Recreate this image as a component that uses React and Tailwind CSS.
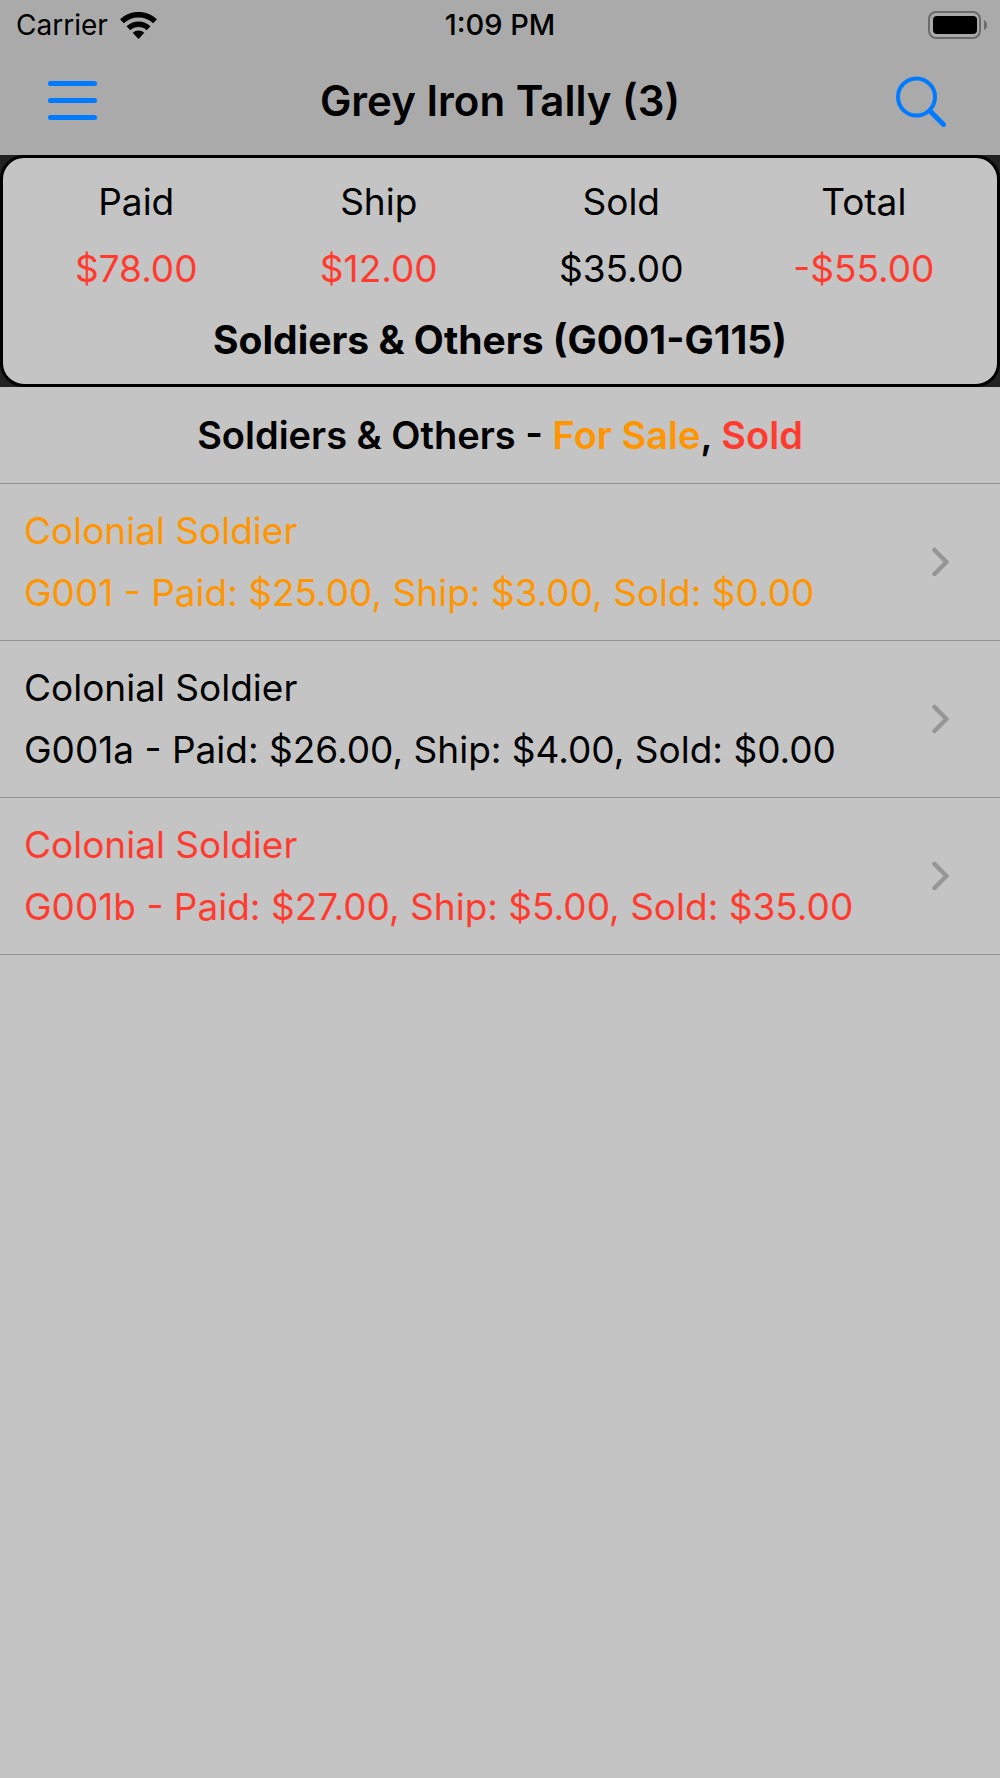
import React from 'react'

const totals = [
  { label: 'Paid', value: '$78.00', color: 'text-[#ff3b30]' },
  { label: 'Ship', value: '$12.00', color: 'text-[#ff3b30]' },
  { label: 'Sold', value: '$35.00', color: 'text-black' },
  { label: 'Total', value: '-$55.00', color: 'text-[#ff3b30]' },
]

const items = [
  { name: 'Colonial Soldier', detail: 'G001 - Paid: $25.00, Ship: $3.00, Sold: $0.00', color: 'text-[#ff9500]' },
  { name: 'Colonial Soldier', detail: 'G001a - Paid: $26.00, Ship: $4.00, Sold: $0.00', color: 'text-black' },
  { name: 'Colonial Soldier', detail: 'G001b - Paid: $27.00, Ship: $5.00, Sold: $35.00', color: 'text-[#ff3b30]' },
]

const StatusBar = () => {
  return (
    <div className="grid grid-cols-3 items-center h-[50px] px-3">
      <div className="flex items-center gap-3 pl-1 text-[28px]">
        <span>Carrier</span>
        <svg width="37" height="27" viewBox="0 0 37 27" aria-hidden="true">
          <path d="M1.900 9.200A24.300 24.300 0 0 1 35.100 9.200" fill="none" stroke="black" strokeWidth="5.500" />
          <path d="M8.400 16.200A14.800 14.800 0 0 1 28.600 16.200" fill="none" stroke="black" strokeWidth="5.500" />
          <path d="M18.500 27L12.700 20.800A8.500 8.500 0 0 1 24.300 20.800z" />
        </svg>
      </div>
      <span className="text-center text-[29px] font-medium">1:09 PM</span>
      <svg className="justify-self-end" width="60" height="28" viewBox="0 0 60 28" aria-hidden="true">
        <rect x="1" y="1" width="51" height="26" rx="7" fill="none" stroke="#6b6b6b" strokeWidth="2" />
        <rect x="5" y="5" width="44" height="18" rx="4" />
        <path d="M56 9q3 1.500 3 5t-3 5z" fill="#6b6b6b" />
      </svg>
    </div>
  )
}

const App = () => {
  return (
    <div className="min-h-screen bg-[#c4c4c4] text-black font-['Inter',sans-serif]">
      <header className="bg-[#aaaaaa]">
        <StatusBar />
        <div className="flex items-center justify-between h-[105px] px-12 pb-1">
          <button aria-label="Menu">
            <svg width="56" height="41" viewBox="0 0 56 41" stroke="#007aff" strokeWidth="5" strokeLinecap="round">
              <path d="M2.500 3.500h44M2.500 20.500h44M2.500 37.500h44" />
            </svg>
          </button>
          <h1 className="text-[42px] font-semibold">Grey Iron Tally (3)</h1>
          <button aria-label="Search">
            <svg width="56" height="53" viewBox="0 0 56 53" fill="none" stroke="#007aff">
              <circle cx="20.500" cy="23" r="18.500" strokeWidth="4" />
              <path d="M34 37l13.500 13.500" strokeWidth="5" strokeLinecap="round" />
            </svg>
          </button>
        </div>
      </header>

      {/* Totals */}
      <section className="bg-[#222]">
        <div className="rounded-[24px] border-[3px] border-black bg-[#c4c4c4] px-3 pt-3 pb-2 text-center">
          <div className="grid grid-cols-4 text-[37px]">
            {totals.map((t) => (
              <div key={t.label}>
                <p className="leading-[64px]">{t.label}</p>
                <p className={`leading-[70px] ${t.color}`}>{t.value}</p>
              </div>
            ))}
          </div>
          <h2 className="text-[39px] leading-[72px] font-bold">Soldiers &amp; Others (G001-G115)</h2>
        </div>
      </section>

      <h3 className="h-[97px] leading-[96px] text-[38px] font-semibold text-center border-b border-[#929292]">
        Soldiers &amp; Others - <span className="text-[#ff9500]">For Sale</span>, <span className="text-[#ff3b30]">Sold</span>
      </h3>

      <ul>
        {items.map((item) => (
          <li key={item.detail} className="border-b border-[#929292]">
            <a href="#item" className={`flex items-center justify-between h-[156px] pl-6 pr-12 text-[37px] leading-[62px] ${item.color}`}>
              <div>
                <p>{item.name}</p>
                <p>{item.detail}</p>
              </div>
              <svg width="22" height="30" viewBox="0 0 22 30" fill="none" stroke="#969696" strokeWidth="4.500" strokeLinecap="round" strokeLinejoin="round" aria-hidden="true">
                <path d="M4.500 3l12 12-12 12" />
              </svg>
            </a>
          </li>
        ))}
      </ul>
    </div>
  )
}

export default App
